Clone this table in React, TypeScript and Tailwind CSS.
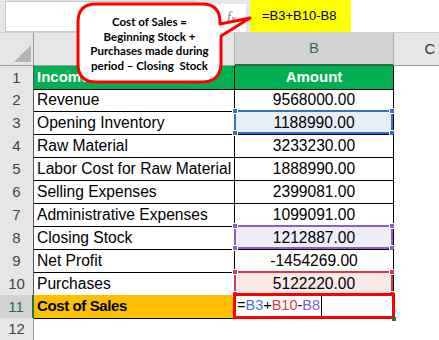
import React from "react";

const rows: { n: number; a: string; b: string; sel?: "blue" | "purple" | "red" }[] = [
  { n: 2, a: "Revenue", b: "9568000.00" },
  { n: 3, a: "Opening Inventory", b: "1188990.00", sel: "blue" },
  { n: 4, a: "Raw Material", b: "3233230.00" },
  { n: 5, a: "Labor Cost for Raw Material", b: "1888990.00" },
  { n: 6, a: "Selling Expenses", b: "2399081.00" },
  { n: 7, a: "Administrative Expenses", b: "1099091.00" },
  { n: 8, a: "Closing Stock", b: "1212887.00", sel: "purple" },
  { n: 9, a: "Net Profit", b: "-1454269.00" },
  { n: 10, a: "Purchases", b: "5122220.00", sel: "red" },
];

function Handles({ color }: { color: string }) {
  const cls = "absolute w-[6px] h-[6px] border border-white";
  return (
    <>
      <div className={`${cls} -left-[4px] -top-[4px]`} style={{ background: color }} />
      <div className={`${cls} -right-[4px] -top-[4px]`} style={{ background: color }} />
      <div className={`${cls} -left-[4px] -bottom-[4px]`} style={{ background: color }} />
      <div className={`${cls} -right-[4px] -bottom-[4px]`} style={{ background: color }} />
    </>
  );
}

function Sel({ kind }: { kind: "blue" | "purple" | "red" }) {
  if (kind === "blue")
    return (
      <div className="absolute -left-[1px] -top-[1px] right-0 bottom-0 border-2 border-[#3a6fc9] bg-[#e8eef8] z-0">
        <Handles color="#3a6fc9" />
      </div>
    );
  if (kind === "purple")
    return (
      <div className="absolute -left-[1px] -top-[1px] right-0 bottom-0 border-2 border-[#8a62c0] bg-[#efedf7] z-0">
        <Handles color="#8a62c0" />
      </div>
    );
  return (
    <div className="absolute -left-[1px] -top-[1px] right-0 bottom-0 border-2 border-[#c8404a] bg-[#fbe9e9] z-0">
      <Handles color="#c8404a" />
    </div>
  );
}

export default function App() {
  return (
    <div
      className="relative w-[439px] h-[340px] overflow-hidden bg-white text-black"
      style={{ fontFamily: '"Liberation Sans", Arial, sans-serif' }}
    >
      <div className="w-[466px]">
        {/* Formula bar */}
        <div className="flex h-[33px] bg-[#e6e6e6] border-b border-[#d0d0d0]">
          <div className="ml-[5px] mt-[1px] h-[31px] w-[190px] bg-white border border-[#c6c6c6]" />
          <div className="ml-[22px] mt-[4px] h-[28px] w-[29px] bg-white flex items-center justify-center">
            <span
              className="italic text-[#7a7a7a] text-[14px] leading-none"
              style={{ fontFamily: '"Liberation Serif", serif' }}
            >
              f<span className="text-[11px]">x</span>
            </span>
          </div>
          <div className="ml-[4px] flex-1 bg-white flex">
            <div className="w-[101px] h-[32px] bg-[#ffff00] flex items-center pl-[12px] text-[13px]">
              =B3+B10-B8
            </div>
          </div>
        </div>

        {/* Column headers */}
        <div className="grid grid-cols-[34px_201px_159px_72px] h-[33px] text-[15px]">
          <div className="relative bg-[#e6e6e6] border-r border-b border-[#9b9b9b]">
            <div
              className="absolute right-[2px] bottom-[3px] w-0 h-0 border-l-[17px] border-l-transparent border-b-[17px] border-b-[#b5b5b5]"
            />
          </div>
          <div className="bg-[#e6e6e6] border-r border-b border-[#b0b0b0] border-b-[#9b9b9b]" />
          <div className="bg-[#d2d2d2] border-r border-[#b0b0b0] border-b-2 border-b-[#217346] flex items-center justify-center text-[#3b6b4f]">
            B
          </div>
          <div className="bg-[#e6e6e6] border-b border-[#9b9b9b] flex items-center justify-center text-[#333]">
            C
          </div>
        </div>

        {/* Row 1 */}
        <div className="grid grid-cols-[34px_201px_159px_72px] h-[22px]">
          <div className="bg-[#e6e6e6] border-r border-[#555] flex items-center justify-center text-[15px] text-[#444]">
            1
          </div>
          <div className="bg-[#00b050] border-r border-b border-black flex items-center pl-[3px] text-white font-bold text-[15px]">
            Income
          </div>
          <div className="bg-[#00b050] border-r border-b border-black flex items-center justify-center text-white font-bold text-[15px]">
            Amount
          </div>
          <div />
        </div>

        {rows.map((r) => (
          <div key={r.n} className="grid grid-cols-[34px_201px_159px_72px] h-[23px] text-[15.6px]">
            <div className="bg-[#e6e6e6] border-r border-[#555] flex items-center justify-center text-[15px] text-[#444]">
              {r.n}
            </div>
            <div className="border-r border-b border-black flex items-center pl-[3px] whitespace-nowrap overflow-hidden">
              {r.a}
            </div>
            <div className="relative border-r border-b border-black flex items-center justify-center">
              {r.sel && <Sel kind={r.sel} />}
              <span className="relative z-10">{r.b}</span>
            </div>
            <div />
          </div>
        ))}

        {/* Row 11 */}
        <div className="grid grid-cols-[34px_201px_159px_72px] h-[23px]">
          <div className="bg-[#d2d2d2] border-r-2 border-[#217346] flex items-center justify-center text-[15px] text-[#217346]">
            11
          </div>
          <div className="bg-[#ffc000] border-r border-b border-black flex items-center pl-[3px] font-bold text-[15px] tracking-[-0.4px]">
            Cost of Sales
          </div>
          <div className="relative border-r border-b border-black flex items-center pl-[2px] text-[14.5px]">
            <div className="absolute -left-[2px] -top-[2px] -right-[2px] -bottom-[1px] border-[3px] border-[#ff0000]" />
            <div className="absolute -right-[3px] -bottom-[3px] w-[4px] h-[4px] bg-[#217346]" />
            <span className="relative">
              =<span className="text-[#3a78d8]">B3</span>+<span className="text-[#d23c3c]">B10</span>-
              <span className="text-[#8a5cc4]">B8</span>
            </span>
            <span className="relative ml-[1px] w-[1px] h-[20px] bg-black" />
          </div>
          <div />
        </div>

        {/* Row 12 */}
        <div className="grid grid-cols-[34px_201px_159px_72px] h-[23px]">
          <div className="bg-[#e6e6e6] border-r border-[#9b9b9b] flex items-center justify-center text-[15px] text-[#444]">
            12
          </div>
          <div />
          <div />
          <div />
        </div>
      </div>

      {/* Callout */}
      <svg className="absolute left-0 top-0" width="260" height="90" viewBox="0 0 260 90">
        <path
          d="M96 4 H202 Q220 4 220 22 V24 L250 18 L221 36 V64 Q220 82 202 82 H96 Q78 82 78 64 V22 Q78 4 96 4 Z"
          fill="white"
          stroke="#ff0000"
          strokeWidth="3"
          strokeLinejoin="round"
        />
      </svg>
      <div
        className="absolute left-[78px] top-[15px] w-[143px] text-center font-bold text-[11.5px] leading-[14.7px] text-black"
        style={{ fontFamily: "Lato, sans-serif" }}
      >
        <div>Cost of Sales =</div>
        <div>Beginning Stock +</div>
        <div>Purchases made during</div>
        <div>period – Closing&nbsp; Stock</div>
      </div>
    </div>
  );
}
